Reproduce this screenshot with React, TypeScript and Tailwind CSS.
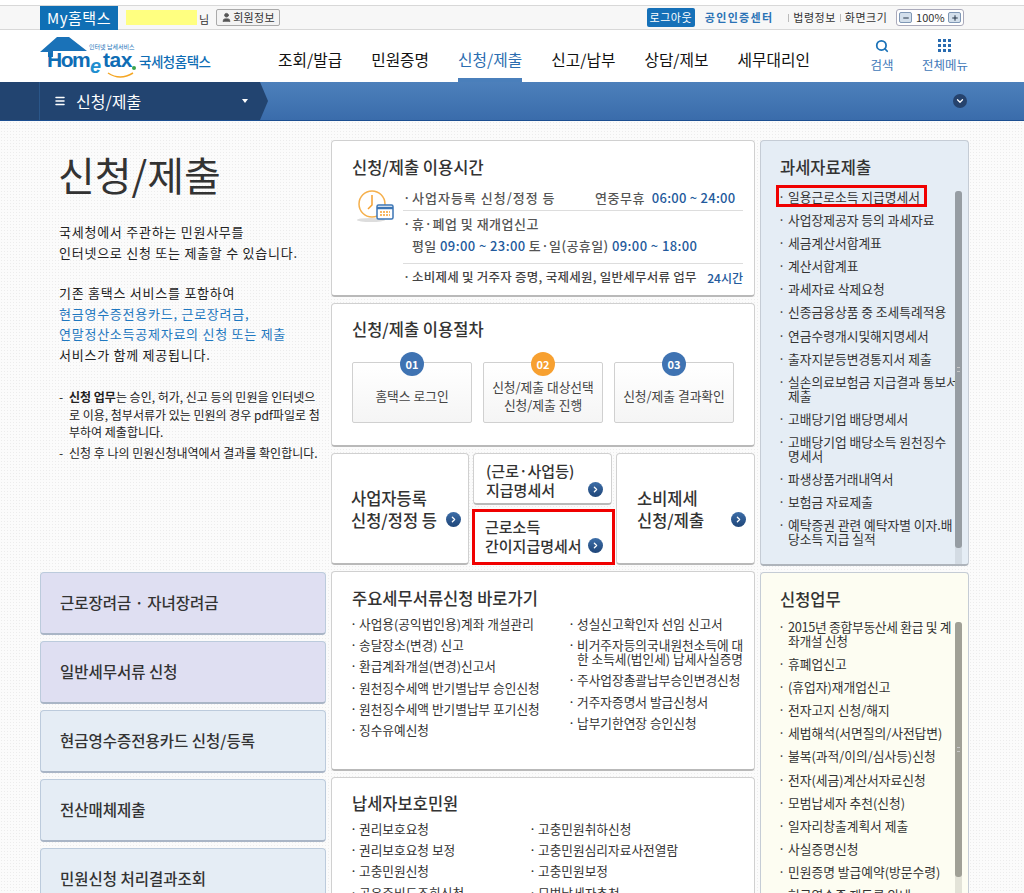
import { ChevronDown, ChevronRight, Menu, Minus, Plus, Search, User } from "lucide-react";

const font = "font-['Noto_Sans_CJK_KR','Noto_Sans',sans-serif]";

const navItems = ["조회/발급", "민원증명", "신청/제출", "신고/납부", "상담/제보", "세무대리인"];

const taxItems = [
  "일용근로소득 지급명세서",
  "사업장제공자 등의 과세자료",
  "세금계산서합계표",
  "계산서합계표",
  "과세자료 삭제요청",
  "신종금융상품 중 조세특례적용",
  "연금수령개시및해지명세서",
  "출자지분등변경통지서 제출",
  "실손의료보험금 지급결과 통보서 제출",
  "고배당기업 배당명세서",
  "고배당기업 배당소득 원천징수 명세서",
  "파생상품거래내역서",
  "보험금 자료제출",
  "예탁증권 관련 예탁자별 이자.배당소득 지급 실적",
];

const applyItems = [
  "2015년 종합부동산세 환급 및 계좌개설 신청",
  "휴폐업신고",
  "(휴업자)재개업신고",
  "전자고지 신청/해지",
  "세법해석(서면질의/사전답변)",
  "불복(과적/이의/심사등)신청",
  "전자(세금)계산서자료신청",
  "모범납세자 추천(신청)",
  "일자리창출계획서 제출",
  "사실증명신청",
  "민원증명 발급예약(방문수령)",
  "현금영수증 재등록 안내",
];

const docsLeft = [
  "사업용(공익법인용)계좌 개설관리",
  "송달장소(변경) 신고",
  "환급계좌개설(변경)신고서",
  "원천징수세액 반기별납부 승인신청",
  "원천징수세액 반기별납부 포기신청",
  "징수유예신청",
];

const docsRight = [
  "성실신고확인자 선임 신고서",
  "비거주자등의국내원천소득에 대한 소득세(법인세) 납세사실증명",
  "주사업장총괄납부승인변경신청",
  "거주자증명서 발급신청서",
  "납부기한연장 승인신청",
];

const protectLeft = ["권리보호요청", "권리보호요청 보정", "고충민원신청", "공유주비드조회신청"];
const protectRight = ["고충민원취하신청", "고충민원심리자료사전열람", "고충민원보정", "모범납세자추천"];

const sideCards = [
  { label: "근로장려금 · 자녀장려금", tone: "bg-[#dfdff2]" },
  { label: "일반세무서류 신청", tone: "bg-[#dfdff2]" },
  { label: "현금영수증전용카드 신청/등록", tone: "bg-[#e5edf5]" },
  { label: "전산매체제출", tone: "bg-[#e5edf5]" },
  { label: "민원신청 처리결과조회", tone: "bg-[#e5edf5]" },
];

const steps = [
  { no: "01", lines: ["홈택스 로그인"], tone: "bg-[#3f73b2]" },
  { no: "02", lines: ["신청/제출 대상선택", "신청/제출 진행"], tone: "bg-[#f7a030]" },
  { no: "03", lines: ["신청/제출 결과확인"], tone: "bg-[#3f73b2]" },
];

function Arrow() {
  return (
    <span className="flex h-[15px] w-[15px] shrink-0 items-center justify-center rounded-full bg-gradient-to-b from-[#3d6ea8] to-[#1f4679]">
      <ChevronRight className="h-[9px] w-[9px] text-white" strokeWidth={3.5} aria-hidden="true" />
    </span>
  );
}

function DotItem({ text, className = "" }: { text: string; className?: string }) {
  return (
    <li className={`flex text-[12.7px] leading-[14px] text-[#333] ${className}`}>
      <span className="-ml-[2px] w-[9px] shrink-0">·</span>
      <span>{text}</span>
    </li>
  );
}

function Panel({ className = "", children }: { className?: string; children: React.ReactNode }) {
  return (
    <section className={`rounded-[4px] border border-[#d0d0d0] border-b-2 border-b-[#b9b9b9] bg-white ${className}`}>
      {children}
    </section>
  );
}

function Logo() {
  return (
    <div className="relative h-[46px] w-[176px] shrink-0">
      <svg width="48" height="26" viewBox="0 0 48 26" className="absolute left-0 top-0" aria-hidden="true">
        <path d="M0 15 L17 0 H29 L47 14 H13 V20 H8 V15 Z" fill="#1a72b8" />
      </svg>
      <span className="absolute left-[7px] top-[8px] font-['Liberation_Sans',sans-serif] text-[21px] font-bold leading-[30px] tracking-[-1.5px] text-[#0f6db5]">
        Hom
      </span>
      <span className="absolute left-[50px] top-[14px] font-['Liberation_Sans',sans-serif] text-[20px] font-bold italic leading-[30px] text-[#1f8fd0]">
        e
      </span>
      <span className="absolute left-[63px] top-[8px] font-['Liberation_Sans',sans-serif] text-[21px] font-bold leading-[30px] tracking-[-0.5px] text-[#0f6db5]">
        tax
      </span>
      <span className="absolute left-[92px] top-[29px] h-[4px] w-[4px] rounded-full bg-[#3aa34a]" />
      <svg width="27" height="7" viewBox="0 0 27 7" className="absolute left-[67px] top-[35px]" aria-hidden="true">
        <path d="M1 1 Q13 9 26 1" fill="none" stroke="#f5a623" strokeWidth="1.5" />
      </svg>
      <span className="absolute left-[49px] top-[6px] whitespace-nowrap text-[6px] leading-[8px] text-[#1a72b8]">인터넷 납세서비스</span>
      <span className="absolute left-[99px] top-[15px] whitespace-nowrap text-[13.5px] font-medium leading-[18px] tracking-[-0.5px] text-[#0f6db5]">
        국세청홈택스
      </span>
    </div>
  );
}

function TopBar() {
  return (
    <div className="mt-[5px] flex h-[25px] items-center border-y border-[#d8d8d8] bg-[#f7f7f7] pl-[40px] text-[11px] text-[#333]">
      <span className="flex h-[24px] w-[78px] items-center justify-center self-start bg-[#0f6fb5] text-[15px] tracking-[0.5px] text-white">
        My홈택스
      </span>
      <span className="ml-[8px] h-[15px] w-[71px] bg-[#ffff80]" />
      <span className="ml-[2px] mt-[3px]">님</span>
      <span className="ml-[7px] flex h-[17px] items-center gap-[1px] rounded-[2px] border border-[#aaa] bg-[#f3f3f3] px-[4px] tracking-[0.3px]">
        <User className="h-[11px] w-[11px] fill-[#555] text-[#555]" aria-hidden="true" />
        회원정보
      </span>
      <span className="ml-[367px] flex h-[19px] w-[48px] items-center justify-center rounded-[2px] bg-[#1570b8] tracking-[0.5px] text-white">
        로그아웃
      </span>
      <span className="ml-[10px] font-bold tracking-[1.3px] text-[#2a72b5]">공인인증센터</span>
      <span className="ml-[15px] h-[8px] w-px bg-[#bbb]" />
      <span className="ml-[4px] tracking-[0.5px]">법령정보</span>
      <span className="ml-[4px] h-[8px] w-px bg-[#bbb]" />
      <span className="ml-[4px] tracking-[0.5px]">화면크기</span>
      <span className="ml-[9px] flex h-[17px] w-[68px] items-center justify-between rounded-[3px] border border-[#aab] bg-white px-[2px]">
        <span className="flex h-[11px] w-[13px] items-center justify-center rounded-[2px] border border-[#7f97b5] bg-[#d3dfeb]">
          <Minus className="h-[8px] w-[8px] text-[#234]" strokeWidth={3} aria-hidden="true" />
        </span>
        <span className="text-[11px]">100%</span>
        <span className="flex h-[11px] w-[13px] items-center justify-center rounded-[2px] border border-[#7f97b5] bg-[#d3dfeb]">
          <Plus className="h-[8px] w-[8px] text-[#234]" strokeWidth={3} aria-hidden="true" />
        </span>
      </span>
    </div>
  );
}

function NavBar() {
  return (
    <div className="flex h-[52px] bg-white pl-[40px]">
      <div className="pt-[7px]">
        <Logo />
      </div>
      <ul className="ml-[62px] flex gap-[29px] text-[15.75px] text-[#111]">
        {navItems.map((item) => {
          const active = item === "신청/제출";
          return (
            <li
              key={item}
              className={`h-[52px] border-b-[4px] pt-[18px] leading-[24px] ${active ? "border-[#4a7fbb] text-[#2a6cb0]" : "border-transparent"}`}
            >
              {item}
            </li>
          );
        })}
      </ul>
      <div className="ml-[60px] flex w-[24px] flex-col items-center pt-[9px] text-[12.5px] text-[#3f78b8]">
        <Search className="h-[14px] w-[14px] text-[#1a72b8]" strokeWidth={3} aria-hidden="true" />
        <span className="mt-[3px] whitespace-nowrap">검색</span>
      </div>
      <div className="ml-[27px] flex w-[48px] flex-col items-center pt-[9px] text-[12.5px] text-[#3f78b8]">
        <span className="grid grid-cols-3 gap-[2px]">
          {Array.from({ length: 9 }).map((_, index) => (
            <span key={index} className="h-[3px] w-[3px] bg-[#2a6cb0]" />
          ))}
        </span>
        <span className="mt-[4px] whitespace-nowrap">전체메뉴</span>
      </div>
    </div>
  );
}

function SubBar() {
  return (
    <div className="flex h-[39px] border-b border-[#1c4f91] bg-gradient-to-b from-[#4d80bb] to-[#3a6cab]">
      <div className="w-[40px] border-r border-[#2a5689] bg-[#224470]" />
      <div className="relative flex w-[220px] items-center bg-[#224470] pl-[14px] pr-[12px] text-[16px] text-white">
        <Menu className="h-[12px] w-[12px]" strokeWidth={3} aria-hidden="true" />
        <span className="ml-[10px]">신청/제출</span>
        <span className="ml-auto h-0 w-0 border-x-[3.5px] border-t-[4px] border-x-transparent border-t-white" />
        <svg width="9" height="38" viewBox="0 0 9 38" className="absolute -right-[9px] top-0" aria-hidden="true">
          <path d="M0 0 L8 19 L0 38 Z" fill="#224470" />
        </svg>
      </div>
      <span className="ml-auto mr-[57px] mt-[12px] flex h-[14px] w-[14px] items-center justify-center rounded-full bg-[#26436d]">
        <ChevronDown className="h-[10px] w-[10px] text-white" strokeWidth={3} aria-hidden="true" />
      </span>
    </div>
  );
}

function LeftColumn() {
  return (
    <div className="w-[286px] shrink-0">
      <h1 className="ml-[18px] mt-[9px] text-[40px] leading-[50px] text-[#333]">신청/제출</h1>
      <div className="ml-[19px] mt-[23px] text-[13px] leading-[20.5px] tracking-[0.75px] text-[#222]">
        <p>국세청에서 주관하는 민원사무를</p>
        <p>인터넷으로 신청 또는 제출할 수 있습니다.</p>
        <p className="mt-[20px]">기존 홈택스 서비스를 포함하여</p>
        <p className="text-[#1f78c0]">현금영수증전용카드, 근로장려금,</p>
        <p className="text-[#1f78c0]">연말정산소득공제자료의 신청 또는 제출</p>
        <p>서비스가 함께 제공됩니다.</p>
      </div>
      <ul className="ml-[19px] mt-[23px] text-[12px] leading-[17.5px] text-[#222]">
        <li className="flex">
          <span className="w-[10px] shrink-0">-</span>
          <span className="w-[252px] break-all">
            <b>신청 업무</b>는 승인, 허가, 신고 등의 민원을 인터넷으로 이용, 첨부서류가 있는 민원의 경우 pdf파일로 첨부하여 제출합니다.
          </span>
        </li>
        <li className="mt-[3.5px] flex">
          <span className="w-[10px] shrink-0">-</span>
          <span className="whitespace-nowrap">신청 후 나의 민원신청내역에서 결과를 확인합니다.</span>
        </li>
      </ul>
      <div className="mt-[110.5px] flex flex-col gap-[6px]">
        {sideCards.map((card) => (
          <div
            key={card.label}
            className={`flex h-[63px] shrink-0 items-center rounded-[4px] border border-[#bccbdc] border-b-2 border-b-[#a9b5c6] pl-[19px] text-[15.5px] font-medium text-[#333] ${card.tone}`}
          >
            {card.label}
          </div>
        ))}
      </div>
    </div>
  );
}

function HoursPanel() {
  return (
    <Panel className="h-[157px] px-[20px] pt-[14px]">
      <h2 className="text-[16.5px] font-medium leading-[24px] text-[#333]">신청/제출 이용시간</h2>
      <div className="mt-[6px] flex">
        <svg width="38" height="34" viewBox="0 0 38 34" className="ml-[4px] mt-[4px] shrink-0" aria-hidden="true">
          <ellipse cx="15" cy="31" rx="14" ry="2" fill="#ddd" />
          <circle cx="16" cy="15" r="13" fill="none" stroke="#f5b04d" strokeWidth="1.5" />
          <path d="M16 6 V16 L12 20" fill="none" stroke="#f5a030" strokeWidth="1.5" />
          <rect x="21" y="16" width="16" height="14" rx="1.5" fill="#fff" stroke="#3d76b5" strokeWidth="1.5" />
          <path d="M21 19 H37" stroke="#3d76b5" strokeWidth="2.5" />
          <path d="M24 23 h10 M24 26 h10" stroke="#f5a030" strokeWidth="1.5" strokeDasharray="2 1" />
        </svg>
        <div className="ml-[9px] w-[340px] text-[13px] font-medium text-[#555]">
          <div className="flex h-[25px] items-center whitespace-nowrap">
            <span className="w-[9px]">·</span>
            <span className="w-[183px] tracking-[1px]">사업자등록 신청/정정 등</span>
            <span className="tracking-[0.5px]">연중무휴</span>
            <span className="ml-[7px] tracking-[0.25px] text-[#235a9c]">06:00 ~ 24:00</span>
          </div>
          <div className="flex h-[27px] items-center border-t border-[#ddd] whitespace-nowrap">
            <span className="w-[9px]">·</span>
            <span className="tracking-[0.5px]">휴·폐업 및 재개업신고</span>
          </div>
          <div className="h-[26px] pl-[9px] leading-[18px] whitespace-nowrap tracking-[0.4px]">
            평일 <span className="text-[#235a9c]">09:00 ~ 23:00</span> 토·일(공휴일) <span className="text-[#235a9c]">09:00 ~ 18:00</span>
          </div>
          <div className="flex h-[28px] items-center border-t border-[#ddd] text-[12.5px] tracking-[0.25px] whitespace-nowrap">
            <span className="w-[9px]">·</span>
            <span className="w-[298px] text-[#444]">소비제세 및 거주자 증명, 국제세원, 일반세무서류 업무</span>
            <span className="text-[12px] tracking-normal text-[#235a9c]">24시간</span>
          </div>
        </div>
      </div>
    </Panel>
  );
}

function StepsPanel() {
  return (
    <Panel className="h-[144px] px-[20px] pt-[13px]">
      <h2 className="text-[16.5px] font-medium leading-[24px] text-[#333]">신청/제출 이용절차</h2>
      <div className="mt-[21px] flex justify-between">
        {steps.map((step) => (
          <div
            key={step.no}
            className="relative flex h-[61px] w-[120px] flex-col items-center justify-center rounded-[2px] border border-[#d0d0d0] bg-gradient-to-b from-white to-[#f5f5f5] pt-[6px] text-[12.75px] leading-[18px] text-[#444]"
          >
            <span
              className={`absolute -top-[11px] left-1/2 flex h-[24px] w-[24px] -translate-x-1/2 items-center justify-center rounded-full text-[11px] font-bold text-white ${step.tone}`}
            >
              {step.no}
            </span>
            {step.lines.map((line) => (
              <span key={line} className="whitespace-nowrap">
                {line}
              </span>
            ))}
          </div>
        ))}
      </div>
    </Panel>
  );
}

function ShortcutRow() {
  return (
    <div className="flex h-[112px] gap-[4px]">
      <Panel className="flex w-[138px] shrink-0 flex-col justify-center pl-[19px] text-[16.5px] font-medium leading-[22px] text-[#333]">
        <span>사업자등록</span>
        <span className="flex items-center gap-[9px] whitespace-nowrap">
          신청/정정 등 <Arrow />
        </span>
      </Panel>
      <div className="flex w-[139px] shrink-0 flex-col gap-[5px]">
        <Panel className="h-[53px] pl-[12px] pt-[7px] text-[15px] font-medium leading-[19px] text-[#333]">
          <div>(근로·사업등)</div>
          <div className="flex items-center justify-between pr-[8px]">
            지급명세서 <Arrow />
          </div>
        </Panel>
        <div className="-ml-[1px] -mt-[1px] h-[57px] w-[143px] border-[3px] border-[#f00000] bg-white pl-[10px] pt-[5px] text-[15px] font-medium leading-[19px] text-[#333]">
          <div>근로소득</div>
          <div className="flex items-center justify-between pr-[9px] whitespace-nowrap">
            간이지급명세서 <Arrow />
          </div>
        </div>
      </div>
      <Panel className="relative flex flex-1 flex-col justify-center pl-[20px] text-[16.5px] font-medium leading-[22px] text-[#333]">
        <span>소비제세</span>
        <span>신청/제출</span>
        <span className="absolute right-[8px] top-[58px]">
          <Arrow />
        </span>
      </Panel>
    </div>
  );
}

function DocsPanel() {
  return (
    <Panel className="h-[200px] px-[20px] pt-[14px]">
      <h2 className="text-[16.5px] font-medium leading-[24px] text-[#333]">주요세무서류신청 바로가기</h2>
      <div className="mt-[7px] flex">
        <ul className="w-[218px] shrink-0">
          {docsLeft.map((item) => (
            <DotItem key={item} text={item} className="mb-[7.2px] whitespace-nowrap" />
          ))}
        </ul>
        <ul className="w-[180px] shrink-0">
          {docsRight.map((item) => (
            <DotItem key={item} text={item} className="mb-[7.2px] w-[176px] break-all" />
          ))}
        </ul>
      </div>
    </Panel>
  );
}

function ProtectPanel() {
  return (
    <Panel className="h-[200px] px-[20px] pt-[13px]">
      <h2 className="text-[16.5px] font-medium leading-[24px] text-[#333]">납세자보호민원</h2>
      <div className="mt-[7px] flex">
        <ul className="w-[179px] shrink-0">
          {protectLeft.map((item) => (
            <DotItem key={item} text={item} className="mb-[7.2px] whitespace-nowrap" />
          ))}
        </ul>
        <ul>
          {protectRight.map((item) => (
            <DotItem key={item} text={item} className="mb-[7.2px] whitespace-nowrap" />
          ))}
        </ul>
      </div>
    </Panel>
  );
}

function ListPanel({
  title,
  items,
  tone,
  barTone,
  trackTone,
  className,
  listClass,
  highlight,
  thumbClass,
  trackClass,
}: {
  title: string;
  items: string[];
  tone: string;
  barTone: string;
  trackTone: string;
  className: string;
  listClass: string;
  highlight?: string;
  thumbClass: string;
  trackClass: string;
}) {
  return (
    <section className={`relative overflow-hidden rounded-[4px] border border-[#c5ccd5] border-b-2 border-b-[#aeb4bb] pl-[19px] pt-[14px] ${tone} ${className}`}>
      <h2 className="text-[16.5px] font-medium leading-[24px] text-[#333]">{title}</h2>
      <ul className={`w-[178px] ${listClass}`}>
        {items.map((item) => (
          <li
            key={item}
            className={`relative mb-[9.1px] flex break-all text-[12.75px] leading-[14px] text-[#333] ${item.startsWith("2015") ? "tracking-[-0.3px]" : ""}`}
          >
            {item === highlight ? (
              <span className="absolute -left-[4px] -top-[5px] h-[22px] w-[151px] border-[3px] border-[#f00000]" />
            ) : null}
            <span className="-ml-[2px] w-[10px] shrink-0">·</span>
            <span>{item}</span>
          </li>
        ))}
      </ul>
      <div className={`absolute bottom-0 right-[6px] w-[7px] rounded-t-[3px] ${trackTone} ${trackClass}`}>
        <div className={`absolute left-0 right-0 top-0 flex items-center justify-center rounded-[3px] ${barTone} ${thumbClass}`}>
          <span className="h-[5px] w-[3px] border-y border-[#c8c8c8]" />
        </div>
      </div>
    </section>
  );
}

export default function App() {
  return (
    <div className={`h-[893px] overflow-hidden bg-white ${font}`}>
      <TopBar />
      <NavBar />
      <SubBar />
      <main className="flex gap-[5px] bg-[#fbfbfb] bg-[radial-gradient(#ececec_0.5px,transparent_0.5px)] bg-[length:3px_3px] pl-[40px] pt-[19px]">
        <LeftColumn />
        <div className="flex w-[424px] shrink-0 flex-col gap-[6px]">
          <HoursPanel />
          <StepsPanel />
          <ShortcutRow />
          <DocsPanel />
          <ProtectPanel />
        </div>
        <div className="flex w-[209px] shrink-0 flex-col gap-[6px]">
          <ListPanel
            title="과세자료제출"
            items={taxItems}
            tone="bg-[#e5edf5]"
            barTone="bg-[#969da3]"
            trackTone="bg-[#d3dbe3]"
            className="h-[426px]"
            listClass="mt-[11px]"
            thumbClass="bottom-[16px]"
            trackClass="top-[50px]"
            highlight="일용근로소득 지급명세서"
          />
          <ListPanel
            title="신청업무"
            items={applyItems}
            tone="bg-[#fdfdf2]"
            barTone="bg-[#a0a096]"
            trackTone="bg-[#e3e3d8]"
            className="h-[340px]"
            listClass="mt-[9px]"
            thumbClass="h-[255px]"
            trackClass="top-[49px]"
          />
        </div>
      </main>
    </div>
  );
}
